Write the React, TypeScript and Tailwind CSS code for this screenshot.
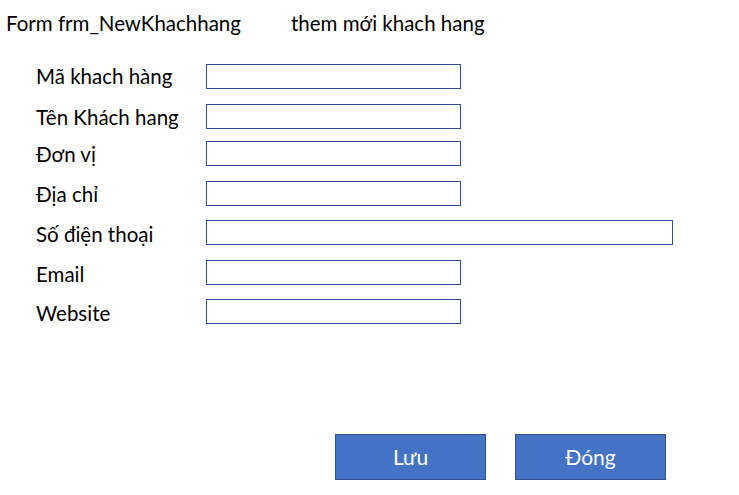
import React from "react";

const rows: { label: string; mt: string; wide?: boolean; pt: string }[] = [
  { label: "Mã khach hàng", mt: "mt-0", pt: "pt-0" },
  { label: "Tên Khách hang", mt: "mt-[15px]", pt: "pt-[1px]" },
  { label: "Đơn vị", mt: "mt-[12px]", pt: "pt-[2px]" },
  { label: "Địa chỉ", mt: "mt-[15px]", pt: "pt-[2px]" },
  { label: "Số điện thoại", mt: "mt-[14px]", wide: true, pt: "pt-[3px]" },
  { label: "Email", mt: "mt-[15px]", pt: "pt-[3px]" },
  { label: "Website", mt: "mt-[14px]", pt: "pt-[4px]" },
];

export default function App() {
  return (
    <div
      className="w-[739px] h-[495px] bg-white text-black overflow-hidden"
      style={{ fontFamily: "Lato, 'Noto Sans', sans-serif" }}
    >
      <div className="flex pl-[6px] pt-[11px] text-[20.5px] leading-[25px]">
        <span className="w-[285px]">Form frm_NewKhachhang</span>
        <span>them mới khach hang</span>
      </div>
      <div className="flex flex-col mt-[28px]">
        {rows.map((r) => (
          <div key={r.label} className={`flex items-center h-[25px] ${r.mt}`}>
            <span
              className={`w-[206px] pl-[36px] text-[20.5px] leading-[25px] whitespace-nowrap ${r.pt}`}
            >
              {r.label}
            </span>
            <div
              className={`h-[25px] border border-[#2F528F] bg-white ${
                r.wide ? "w-[467px]" : "w-[255px]"
              }`}
            />
          </div>
        ))}
      </div>
      <div className="flex gap-[29px] pl-[335px] mt-[110px]">
        <button className="w-[151px] h-[46px] bg-[#4472C4] border border-[#2F528F] text-white text-[21px]">
          Lưu
        </button>
        <button className="w-[151px] h-[46px] bg-[#4472C4] border border-[#2F528F] text-white text-[21px]">
          Đóng
        </button>
      </div>
    </div>
  );
}
